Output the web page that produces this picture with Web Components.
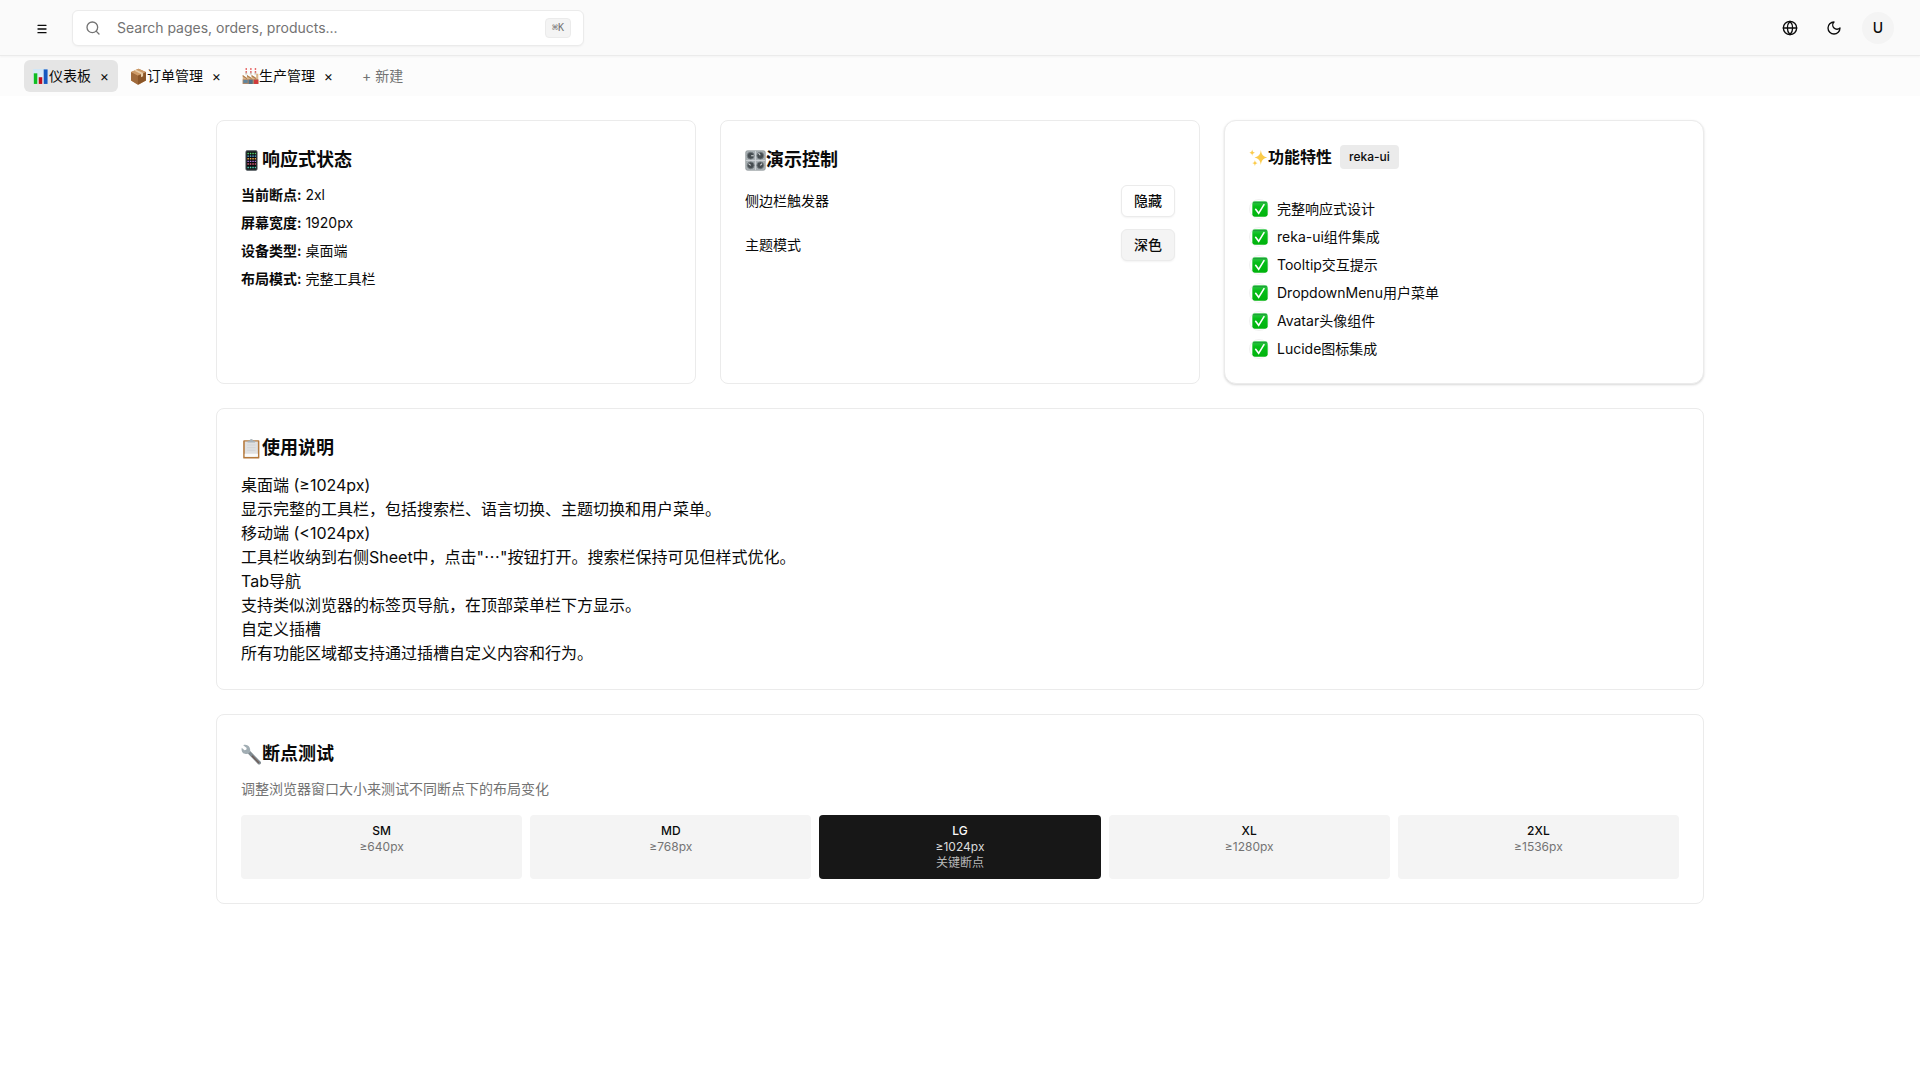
<!DOCTYPE html>
<html lang="zh-CN">
<head>
<meta charset="utf-8">
<meta name="viewport" content="width=device-width, initial-scale=1">
<title>仪表板</title>
<style>
:root{--fg:#0a0a0a;--muted:#737373;--line:#ebebeb;--soft:#f4f4f4}
html,body{margin:0}
body{font:14px/20px Inter,"Noto Sans CJK SC",sans-serif;color:var(--fg);background:#fff;min-height:100vh}
main{box-sizing:border-box;max-width:1536px;margin:0 auto;padding:24px;display:flex;flex-direction:column;gap:24px}
.row{display:grid;grid-template-columns:repeat(auto-fit,minmax(320px,1fr));gap:24px}
</style>
</head>
<body>
<app-header></app-header>
<tab-bar></tab-bar>
<main>
  <div class="row">
    <info-card icon="phone" heading="响应式状态"><status-list></status-list></info-card>
    <info-card icon="knobs" heading="演示控制">
      <control-row label="侧边栏触发器" action="隐藏"></control-row>
      <control-row label="主题模式" action="深色" filled></control-row>
    </info-card>
    <info-card icon="sparkles" heading="功能特性" badge="reka-ui" raised><feature-list></feature-list></info-card>
  </div>
  <info-card icon="clipboard" heading="使用说明"><usage-guide></usage-guide></info-card>
  <info-card icon="wrench" heading="断点测试"><breakpoint-test></breakpoint-test></info-card>
</main>
<script>
const ART = {
  chart:`<defs><linearGradient id="g" x2="0" y2="1"><stop stop-color="#cfe6f7"/><stop offset="1" stop-color="#f2f7fb"/></linearGradient></defs><rect x="1.5" y="1.5" width="21" height="21" rx="1" fill="url(#g)"/><path d="M1.5 8.5h21M1.5 15.5h21M8.5 1.5v21M15.5 1.5v21" stroke="#dbe7ef" stroke-width=".6"/><rect x="2.5" y="7.5" width="5" height="15" fill="#10bd22"/><rect x="9.5" y="13" width="5" height="9.500" fill="#c0101f"/><rect x="16.500" y="2" width="5.500" height="20.500" fill="#1558c0"/>`,
  box:`<path d="M12 1 22.500 5.500v12L12 23.500 1.500 17.500v-12z" fill="#b98250"/><path d="M1.500 5.500 11 10.500v13L1.500 17.500z" fill="#a06a3b"/><path d="M22.500 5.500 11 10.500v13l11.500-6z" fill="#8a5527"/><path d="M12 1 22.500 5.500 11 10.500 1.500 5.500z" fill="#cd9a67"/><path d="m5.500 3.700 10 4.800v4.500l3-1.500V7L8.500 2.300z" fill="#e8cda8"/>`,
  factory:`<path d="M4.500 9 5 5h2l.5 4zM11 9l.5-4h2l.5 4zM17.500 9l.5-4h2l.5 4z" fill="#cfc4b8"/><path d="M5 5.500h2M11.500 5.500h2M18 5.500h2M5 1.500h2M11.500 1.500h2M18 1.500h2" stroke="#e13d3d" stroke-width="2"/><path d="M1 22.500V10l6 4v-4l6.500 4v-4L20 14V8h3v14.500z" fill="#dbb58a"/><path d="m1 10 6 4v2L1 12zm6 0 6.500 4v2L7 12zm6.500 0L20 14v2l-6.500-4z" fill="#b0804f"/><rect x="1" y="16" width="22" height="6.500" fill="#a9856a"/><rect x="2" y="17" width="6" height="4" fill="#5d86a0"/><rect x="9.500" y="16.500" width="5.500" height="6" fill="#4f7186"/><rect x="17" y="16.500" width="6" height="6" fill="#d0393b"/>`,
  phone:`<rect x="5.500" y=".7" width="13" height="22.600" rx="1.600" fill="#22272b" stroke="#586066" stroke-width=".8"/><rect x="6.800" y="2.400" width="10.400" height="19" fill="#07090c"/><g stroke-width="1.600" stroke-dasharray="1.700 1.100"><path d="M7.300 4h9.800" stroke="#5fd673"/><path d="M7.300 7h9.800" stroke="#62bdf5"/><path d="M7.300 10h9.800" stroke="#f0a94a"/><path d="M7.300 13h9.800" stroke="#a978e0"/><path d="M7.300 16h9.800" stroke="#e0607b"/><path d="M7.300 20h9.800" stroke="#55d6ba"/></g>`,
  knobs:`<rect x=".8" y=".8" width="22.400" height="22.400" rx="2" fill="#a9b0b4" stroke="#858d91" stroke-width=".7"/><path d="M12 1v22M1 12h22" stroke="#d0d5d8"/><g fill="#454c50" stroke="#737b80"><circle cx="6.500" cy="6.500" r="3.900"/><circle cx="17.500" cy="6.500" r="3.900"/><circle cx="6.500" cy="17.500" r="3.900"/><circle cx="17.500" cy="17.500" r="3.900"/></g><path d="M7 6.500h3M17.500 6l-2-2.500M6.500 17.500l-2.500-2M17.500 17.500l2-2" stroke="#d7dadc" stroke-width="1.200"/>`,
  sparkles:`<path d="M15 2.500c.8 5.900 2.400 7.800 8 9.500-5.600 1.700-7.200 3.600-8 9.500-.8-5.900-2.400-7.800-8-9.500 5.600-1.700 7.200-3.600 8-9.500zM4 2c.4 2.600 1.100 3.400 3.500 4C5.100 6.600 4.400 7.400 4 10c-.4-2.600-1.100-3.400-3.500-4C2.900 5.400 3.600 4.600 4 2zM7.500 15c.4 2.600 1.100 3.400 3.500 4-2.400.6-3.100 1.400-3.500 4-.4-2.600-1.100-3.400-3.500-4 2.400-.6 3.100-1.400 3.500-4z" fill="#fbcb4a"/>`,
  clipboard:`<rect x="2.500" y="2.500" width="18.500" height="21" rx="1" fill="#b5793c"/><path d="M4.300 4h15v17.500h-15z" fill="#dfe0e1"/><path d="M4.300 18h15v3.500h-15z" fill="#fafafa"/><path d="M7 8h9.500M7 11h9.500M7 14h9.500" stroke="#cdcfd1" stroke-width=".8"/><path d="M7.500 5V3h2.300a2 2 0 0 1 4 0H16v2z" fill="#a9b2b7"/>`,
  wrench:`<path d="M7.500 10.500 19.500 23q1.500 1 2.700-.2t.3-2.600L10.500 8z" fill="#818b91"/><path d="M12.500 13.500 20.500 21.700" stroke="#6f5b56" stroke-width="1.500"/><path d="M2.500 1.300 6.500 4.500 6 6.500 4 7 .8 4.200C0 8 1.500 10.500 4.500 11.200c2 .5 3.700.2 4.800-.8C10.800 9 11 6.500 9.800 4 8.500 1.500 5.500.2 2.500 1.300z" fill="#a1adb3"/>`,
  check:`<defs><linearGradient id="g" x2="0" y2="1"><stop stop-color="#35c94b"/><stop offset=".35" stop-color="#05bd18"/><stop offset="1" stop-color="#00b30c"/></linearGradient></defs><rect x=".5" y=".5" width="23" height="23" rx="3.500" fill="url(#g)"/><path d="M2 2.500h20" stroke="#1f983a" stroke-width="1.500"/><path d="m5.500 12.500 4.500 6L18 5.500" fill="none" stroke="#fff" stroke-width="2.400" stroke-linecap="round"/>`
};
const LINE = {
  search:`<circle cx="11" cy="11" r="8"/><path d="m21 21-4.300-4.300"/>`,
  globe:`<circle cx="12" cy="12" r="10"/><path d="M12 2a14.500 14.500 0 0 0 0 20 14.500 14.500 0 0 0 0-20M2 12h20"/>`,
  moon:`<path d="M12 3a6 6 0 0 0 9 9 9 9 0 1 1-9-9Z"/>`,
  menu:`<path d="M6 8h12M6 13.500h12M6 19h12"/>`
};
const define = (name, render) => customElements.define(name, class extends HTMLElement {
  connectedCallback(){
    if (this.shadowRoot) return;
    const t = document.createElement('template');
    t.innerHTML = `<style>:host{display:block}*{box-sizing:border-box}button,input{font:inherit;color:inherit;margin:0}</style>` + render(this);
    this.attachShadow({mode:'open'}).append(t.content.cloneNode(true));
  }
});

define('pict-icon', e => `<style>:host{display:inline-flex;flex:none}svg{width:var(--size,18px);height:var(--size,18px)}</style>
<svg viewBox="0 0 24 24" aria-hidden="true">${ART[e.getAttribute('name')]}</svg>`);

define('line-icon', e => `<style>:host{display:inline-flex;flex:none}svg{width:16px;height:16px}</style>
<svg viewBox="0 0 24 24" fill="none" stroke="currentColor" stroke-width="2" stroke-linecap="round" stroke-linejoin="round" aria-hidden="true">${LINE[e.getAttribute('name')]}</svg>`);

define('app-header', () => `<style>
header{display:flex;align-items:center;height:56px;padding:0 24px;background:#fafafa;border-bottom:1px solid var(--line);box-shadow:0 1px 2px #0000000a;position:relative}
button{display:flex;align-items:center;justify-content:center;width:36px;height:36px;padding:0;border:0;border-radius:6px;background:none}
.search{display:flex;align-items:center;margin-left:12px;width:512px;height:36px;padding:0 12px;background:#fff;border:1px solid var(--line);border-radius:6px;box-shadow:0 1px 2px #0000000a}
.search line-icon{color:var(--muted)}
input{flex:1;min-width:0;height:32px;border:0;outline:0;background:none;padding:0 16px}
input::placeholder{color:var(--muted);opacity:1}
kbd{height:20px;padding:0 6px;font:500 10px/18px "DejaVu Sans Mono","Liberation Mono",monospace;color:var(--muted);background:var(--soft);border:1px solid var(--line);border-radius:4px}
nav{display:flex;gap:8px;margin-left:auto}
.avatar{display:flex;align-items:center;justify-content:center;width:32px;height:32px;border-radius:50%;background:var(--soft);font-weight:500}
</style>
<header>
<button aria-label="菜单"><line-icon name="menu"></line-icon></button>
<label class="search"><line-icon name="search"></line-icon><input type="search" aria-label="Search" placeholder="Search pages, orders, products..."><kbd>⌘K</kbd></label>
<nav><button aria-label="语言"><line-icon name="globe"></line-icon></button><button aria-label="主题"><line-icon name="moon"></line-icon></button><button aria-label="用户"><span class="avatar">U</span></button></nav>
</header>`);

define('tab-bar', () => `<style>
nav{display:flex;align-items:center;gap:4px;height:40px;padding:0 24px;background:#fcfcfc}
.tab{display:flex;align-items:center;height:32px;padding:0 8px;border-radius:6px}
.active{background:#e5e5e5}
button{border:0;background:none;padding:0}
.name{display:flex;align-items:center;white-space:nowrap;--size:17px}
.close{margin-left:8px;width:11px;font-size:14px;line-height:16px}
.new{padding:0 16px;color:var(--muted)}
</style>
<nav aria-label="标签页">${[['chart','仪表板'],['box','订单管理'],['factory','生产管理']].map(([i,n],k)=>
`<div class="tab${k?'':' active'}"><button class="name"><pict-icon name="${i}"></pict-icon>${n}</button><button class="close" aria-label="关闭${n}">×</button></div>`).join('')}<button class="new">+ 新建</button></nav>`);

define('info-card', e => {
  const raised = e.hasAttribute('raised'), badge = e.getAttribute('badge');
  return `<style>
section{height:100%;padding:24px;background:#fff;border:1px solid var(--line);border-radius:8px}
.raised{border-radius:12px;box-shadow:0 1px 3px #0000001a,0 1px 2px #0000000f}
header{display:flex;align-items:center;gap:8px;margin-bottom:10px}
h3{display:flex;align-items:center;margin:0;font-size:18px;line-height:30px;font-weight:600;--size:21px}
.raised header{margin-bottom:30px}
.raised h3{font-size:16px;line-height:24px;--size:19px}
.badge{padding:0 9px;font-size:12px;line-height:24px;font-weight:500;background:#ebebeb;border-radius:4px}
.body{display:flex;flex-direction:column;gap:12px}
</style>
<section class="${raised?'raised':''}"><header><h3><pict-icon name="${e.getAttribute('icon')}"></pict-icon>${e.getAttribute('heading')}</h3>${badge?`<span class="badge">${badge}</span>`:''}</header><div class="body"><slot></slot></div></section>`;
});

define('status-list', () => `<style>
div{display:flex;flex-direction:column;gap:8px}p{margin:0}b{font-weight:600}
</style><div>${[['当前断点','2xl'],['屏幕宽度','1920px'],['设备类型','桌面端'],['布局模式','完整工具栏']].map(([k,v])=>`<p><b>${k}:</b> ${v}</p>`).join('')}</div>`);

define('control-row', e => `<style>
div{display:flex;align-items:center;justify-content:space-between}
button{height:32px;padding:0 12px;font-weight:500;background:#fff;border:1px solid var(--line);border-radius:6px;box-shadow:0 1px 2px #0000000d}
.filled{background:var(--soft)}
</style><div><label for="b">${e.getAttribute('label')}</label><button id="b" class="${e.hasAttribute('filled')?'filled':''}">${e.getAttribute('action')}</button></div>`);

define('feature-list', () => `<style>
ul{display:flex;flex-direction:column;gap:8px;margin:0;padding:0;list-style:none}
li{display:flex;align-items:center;gap:8px}
.dot{display:flex;align-items:center;justify-content:flex-end;width:20px;height:20px;border:1px solid #f0f0f0;border-radius:50%;--size:16px}
</style><ul>${['完整响应式设计','reka-ui组件集成','Tooltip交互提示','DropdownMenu用户菜单','Avatar头像组件','Lucide图标集成'].map(t=>`<li><span class="dot"><pict-icon name="check"></pict-icon></span>${t}</li>`).join('')}</ul>`);

define('usage-guide', () => `<style>
:host{font-size:16px;line-height:24px}dl,dd{margin:0}
</style><dl>${[['桌面端 (≥1024px)','显示完整的工具栏，包括搜索栏、语言切换、主题切换和用户菜单。'],['移动端 (&lt;1024px)','工具栏收纳到右侧Sheet中，点击"⋯"按钮打开。搜索栏保持可见但样式优化。'],['Tab导航','支持类似浏览器的标签页导航，在顶部菜单栏下方显示。'],['自定义插槽','所有功能区域都支持通过插槽自定义内容和行为。']].map(([a,b])=>`<dt>${a}</dt><dd>${b}</dd>`).join('')}</dl>`);

define('breakpoint-test', () => `<style>
p{margin:0 0 16px;color:var(--muted)}
.grid{display:grid;grid-template-columns:repeat(5,1fr);gap:8px;text-align:center;font-size:12px;line-height:16px}
.cell{padding:8px;background:var(--soft);border-radius:4px}
b{display:block;font-weight:500}
span{display:block;color:var(--muted)}
.on{background:#171717;color:#fafafa}
.on span{color:#dcdcdc}.on .key{color:#b9b9b9}
</style><p>调整浏览器窗口大小来测试不同断点下的布局变化</p>
<div class="grid">${[['SM',640],['MD',768],['LG',1024],['XL',1280],['2XL',1536]].map(([n,w])=>`<div class="cell${n==='LG'?' on':''}"><b>${n}</b><span>≥${w}px</span>${n==='LG'?'<span class="key">关键断点</span>':''}</div>`).join('')}</div>`);
</script>
</body>
</html>
